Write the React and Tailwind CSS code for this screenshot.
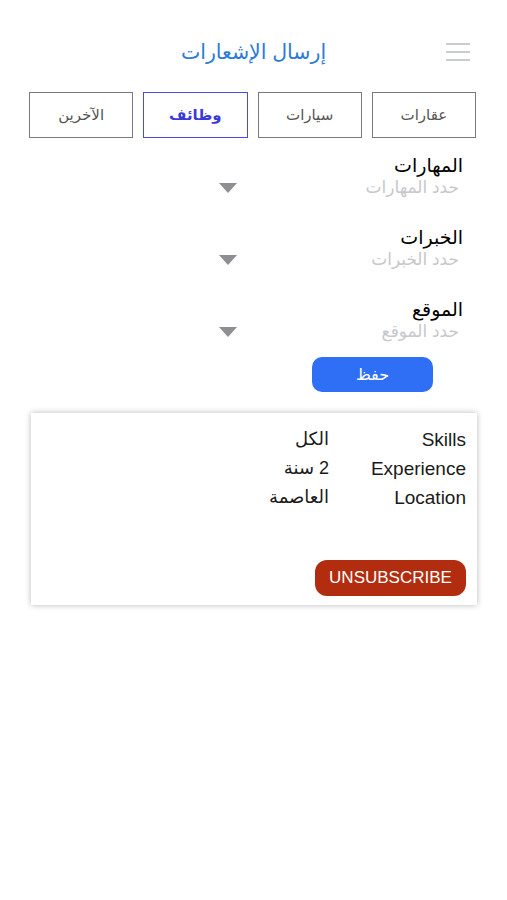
import React, { useState } from "react";

const FONT = { fontFamily: '"Liberation Sans", "DejaVu Sans", "Noto Sans", sans-serif' };

const tabs = ["عقارات", "سيارات", "وظائف", "الآخرين"];

const fields = [
  { label: "المهارات", placeholder: "حدد المهارات" },
  { label: "الخبرات", placeholder: "حدد الخبرات" },
  { label: "الموقع", placeholder: "حدد الموقع" },
];

const summary = [
  { key: "Skills", value: "الكل" },
  { key: "Experience", value: "2 سنة" },
  { key: "Location", value: "العاصمة" },
];

const Caret = () => (
  <svg width="18" height="10" viewBox="0 0 18 10" className="block">
    <path d="M0 0 L18 0 L9 10 Z" fill="#8e8e93" />
  </svg>
);

const SelectField = ({ label, placeholder }) => (
  <div className="w-[246px] mr-[44px] ml-auto pb-[28px]">
    <div className="text-[19px] leading-[24px] text-black text-right">{label}</div>
    <div className="flex items-center justify-between pr-[4px] pl-[2px] h-[20px]">
      <span className="text-[17px] leading-[20px] text-[#c7c7cc]">{placeholder}</span>
      <Caret />
    </div>
  </div>
);

export default function App() {
  const [active, setActive] = useState(2);

  return (
    <div dir="rtl" className="min-h-screen w-[507px] bg-white" style={FONT}>
      {/* Header */}
      <div className="relative mt-[28px] h-[48px] flex items-center justify-center">
        <h1 className="text-[20.5px] text-[#2d7bd6] font-normal">إرسال الإشعارات</h1>
        <button className="absolute right-[37px] top-[15px] flex flex-col gap-[6px]">
          <span className="block w-[24px] h-[2px] bg-[#c9cdd1]" />
          <span className="block w-[24px] h-[2px] bg-[#c9cdd1]" />
          <span className="block w-[24px] h-[2px] bg-[#c9cdd1]" />
        </button>
      </div>

      {/* Category tabs */}
      <div className="mt-[16px] mr-[31px] ml-[29px] grid grid-cols-4 gap-[10px]">
        {tabs.map((t, i) => (
          <button
            key={t}
            onClick={() => setActive(i)}
            className={
              i === active
                ? "h-[46px] border-[1.5px] border-[#4b4ae6] text-[#3b3ad6] font-semibold text-[15px]"
                : "h-[46px] border-[1.5px] border-[#7a7a7a] text-[#555555] text-[15px]"
            }
          >
            {t}
          </button>
        ))}
      </div>

      {/* Filters */}
      <div className="mt-[16px]">
        {fields.map((f) => (
          <SelectField key={f.label} label={f.label} placeholder={f.placeholder} />
        ))}
      </div>

      <div className="-mt-[13px] flex">
        <button className="mr-[74px] w-[121px] h-[35px] rounded-[10px] bg-[#2f6ff5] text-white text-[16px]">
          حفظ
        </button>
      </div>

      {/* Subscription card */}
      <div className="mt-[21px] mr-[30px] ml-[31px] h-[192px] bg-white shadow-[0_0_6px_rgba(0,0,0,0.28)] pt-[12px] pr-[11px] pb-[9px] flex flex-col">
        <div className="grid grid-cols-[137px_1fr]">
          {summary.map((row) => (
            <React.Fragment key={row.key}>
              <div dir="ltr" className="text-right text-[19px] leading-[29px] text-[#1a1a1a]">{row.key}</div>
              <div className="text-right text-[18px] leading-[29px] text-[#1a1a1a]">{row.value}</div>
            </React.Fragment>
          ))}
        </div>
        <div className="mt-auto flex">
          <button className="w-[151px] h-[36px] rounded-[12px] bg-[#b22d0f] text-white text-[17px]">
            UNSUBSCRIBE
          </button>
        </div>
      </div>
    </div>
  );
}
